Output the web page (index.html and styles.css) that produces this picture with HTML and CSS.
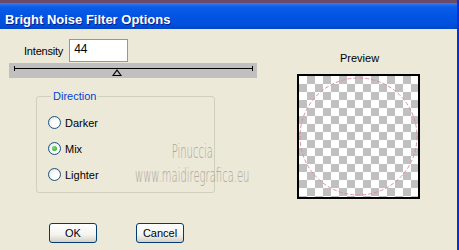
FILE: index.html
```html
<!DOCTYPE html>
<html lang="en">
<head>
    <meta charset="UTF-8">
    <title>Bright Noise Filter Options</title>
    <link rel="stylesheet" href="styles.css">
</head>
<body>
    <div class="window">
        <div class="titlebar">Bright Noise Filter Options</div>
        <div class="content">
            <div class="left">
                <div class="intensity-row">
                    <span class="label">Intensity</span>
                    <input class="num" type="text" value="44">
                </div>
                <div class="slider">
                    <div class="track"></div>
                    <div class="thumb"></div>
                </div>
                <fieldset class="group">
                    <legend>Direction</legend>
                    <label class="radio"><span class="dot"></span>Darker</label>
                    <label class="radio"><span class="dot on"></span>Mix</label>
                    <label class="radio"><span class="dot"></span>Lighter</label>
                </fieldset>
                <div class="watermark">
                    <div>Pinuccia</div>
                    <div>www.maidiregrafica.eu</div>
                </div>
            </div>
            <div class="right">
                <div class="preview-title">Preview</div>
                <div class="preview">
                    <svg width="119" height="121" viewBox="0 0 119 121">
                        <circle cx="59.5" cy="60.5" r="58.5" fill="none" stroke="#d9909f" stroke-width="1" stroke-dasharray="4 2"/>
                    </svg>
                </div>
            </div>
        </div>
        <div class="buttons">
            <button class="btn">OK</button>
            <button class="btn">Cancel</button>
        </div>
    </div>
</body>
</html>
```

FILE: styles.css
```css
body {
    margin: 0;
    font-family: "Liberation Sans", Arial, sans-serif;
    font-size: 11px;
    color: #000;
}

.window {
    width: 459px;
    height: 250px;
    background-color: #ece9d8;
    position: relative;
    overflow: hidden;
    box-sizing: border-box;
    border-right: 2px solid #0831d9;
}

.titlebar {
    height: 29px;
    box-sizing: border-box;
    padding: 9px 0 0 5px;
    color: #fff;
    font-weight: bold;
    font-size: 13px;
    text-shadow: 1px 1px 0 #0a1e8c;
    border-top: 3px solid #6a4a6a;
    background: linear-gradient(to bottom, #3a7cf0 0px, #0a5ce8 4px, #0054e3 14px, #0050dc 22px, #0046c8 26px);
}

.content {
    display: flex;
}

.left {
    width: 270px;
    position: relative;
}

.intensity-row {
    display: flex;
    align-items: center;
    margin: 10px 0 0 24px;
    height: 23px;
}

.label {
    margin-right: 6px;
    letter-spacing: -0.2px;
}

.num {
    width: 59px;
    height: 23px;
    box-sizing: border-box;
    border: 1px solid #7f9db9;
    padding: 0 0 4px 4px;
    font-family: inherit;
    font-size: 12px;
    outline: none;
}

.slider {
    position: relative;
    margin: 1px 0 0 9px;
    width: 248px;
    height: 15px;
    background-color: #c0c0c0;
}

.track {
    position: absolute;
    left: 5px;
    right: 4px;
    top: 5px;
    height: 1px;
    background-color: #000;
}

.track::before,
.track::after {
    content: "";
    position: absolute;
    top: -2px;
    width: 1px;
    height: 5px;
    background-color: #000;
}

.track::before { left: 0; }
.track::after { right: 0; }

.thumb {
    position: absolute;
    left: 103px;
    top: 6px;
    width: 0;
    height: 0;
    border-left: 5px solid transparent;
    border-right: 5px solid transparent;
    border-bottom: 7px solid #000;
}

.thumb::after {
    content: "";
    position: absolute;
    left: -3px;
    top: 2px;
    border-left: 3px solid transparent;
    border-right: 3px solid transparent;
    border-bottom: 4px solid #c0c0c0;
}

.group {
    margin: 12px 0 0 36px;
    width: 179px;
    height: 103px;
    box-sizing: border-box;
    border: 1px solid #d0d0bf;
    border-radius: 3px;
    padding: 14px 0 0 10px;
}

.group legend {
    color: #0046d5;
    padding: 0 2px;
    margin-left: 4px;
    font-size: 11px;
}

.radio {
    display: flex;
    align-items: center;
    height: 13px;
    margin-bottom: 13px;
    margin-left: 1px;
}

.dot {
    width: 11px;
    height: 11px;
    border: 1px solid #1c5180;
    border-radius: 50%;
    background: radial-gradient(circle at 60% 60%, #fff 30%, #dcdcd3 100%);
    margin-right: 4px;
    position: relative;
}

.dot.on::after {
    content: "";
    position: absolute;
    left: 3px;
    top: 3px;
    width: 5px;
    height: 5px;
    border-radius: 50%;
    background: radial-gradient(circle at 40% 40%, #7ee07e, #21a121);
}

/* watermark stamped over the dialog */
.watermark {
    position: absolute;
    left: 135px;
    top: 110px;
    width: max-content;
    white-space: nowrap;
    text-align: center;
    color: #a9a59b;
    font-family: "DejaVu Sans", sans-serif;
    font-weight: 200;
    font-size: 20px;
    line-height: 24px;
    transform: scaleX(0.5);
    transform-origin: left top;
}

.right {
    width: 187px;
}

.preview-title {
    margin: 23px 0 0 70px;
    height: 12px;
}

.preview {
    margin: 10px 0 0 27px;
    width: 119px;
    height: 121px;
    border: 2px solid #000;
    background: conic-gradient(#c0c0c0 0 25%, #fff 0 50%, #c0c0c0 0 75%, #fff 0);
    background-size: 16px 16px;
}

.preview svg {
    display: block;
}

.buttons {
    position: absolute;
    left: 49px;
    top: 223px;
    display: flex;
    gap: 39px;
}

.btn {
    width: 48px;
    height: 20px;
    border: 1px solid #003c74;
    border-radius: 3px;
    background: linear-gradient(to bottom, #fff 0%, #f4f3ee 60%, #d6d0c5 100%);
    font-family: inherit;
    font-size: 11px;
    padding: 0;
    color: #000;
}
```
